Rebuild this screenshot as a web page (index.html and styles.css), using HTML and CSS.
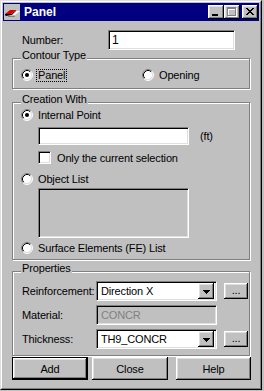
FILE: index.html
```html
<!DOCTYPE html>
<html>
<head>
<meta charset="utf-8">
<link rel="stylesheet" href="styles.css">
</head>
<body>
<div class="window">
  <div class="window-inner">
    <div class="titlebar">
      <svg class="app-icon" width="16" height="16" viewBox="0 0 16 16">
        <rect width="16" height="16" fill="#c0c0c0"/>
        <polygon points="4,11 9,7 16,7 11,11" fill="#fff"/>
        <polygon points="1,10 6,6 12,6 7,10" fill="#e00000"/>
        <polygon points="1,10 7,10 7,11 2,12 1,11" fill="#000"/>
        <polygon points="7,10 12,6 12,7 8,11 7,11" fill="#800000"/>
        <polygon points="4,12 11,12 11,13 4,13" fill="#808080"/>
      </svg>
      <span class="title">Panel</span>
      <div class="caption-btns">
        <div class="cbtn"><svg width="6" height="2" class="g-min"><rect width="6" height="2" fill="#000"/></svg></div>
        <div class="cbtn"><svg width="10" height="10" class="g-max"><path d="M1 1h9v2H1zM1 3h1v7H1zM9 3h1v7H9zM1 9h9v1H1z" fill="#fff"/><path d="M0 0h9v2H0zM0 2h1v7H0zM8 2h1v7H8zM0 8h9v1H0z" fill="#808080"/></svg></div>
        <div class="cbtn close"><svg width="8" height="7"><path d="M0 0h2v1H0zM6 0h2v1H6zM1 1h2v1H1zM5 1h2v1H5zM2 2h4v1H2zM3 3h2v1H3zM2 4h4v1H2zM1 5h2v1H1zM5 5h2v1H5zM0 6h2v1H0zM6 6h2v1H6z" fill="#000"/></svg></div>
      </div>
    </div>

    <div class="content">
      <div class="number-row">
        <span class="num-label">Number:</span>
        <div class="field num-input">1</div>
      </div>

      <div class="group contour">
        <span class="group-label">Contour Type</span>
        <div class="contour-row">
          <div class="opt opt-panel">
            <svg class="radio" width="12" height="12" viewBox="0 0 12 12"><circle cx="6" cy="6" r="5" fill="#fff"/><path d="M2.11 9.89A5.5 5.5 0 0 1 9.89 2.11" fill="none" stroke="#808080"/><path d="M9.89 2.11A5.5 5.5 0 0 1 2.11 9.89" fill="none" stroke="#fff"/><path d="M2.82 9.18A4.5 4.5 0 0 1 9.18 2.82" fill="none" stroke="#000"/><path d="M9.18 2.82A4.5 4.5 0 0 1 2.82 9.18" fill="none" stroke="#dfdfdf"/><circle cx="6" cy="6" r="2" fill="#000"/></svg>
            <span class="focus-text">Panel</span>
          </div>
          <div class="opt">
            <svg class="radio" width="12" height="12" viewBox="0 0 12 12"><circle cx="6" cy="6" r="5" fill="#fff"/><path d="M2.11 9.89A5.5 5.5 0 0 1 9.89 2.11" fill="none" stroke="#808080"/><path d="M9.89 2.11A5.5 5.5 0 0 1 2.11 9.89" fill="none" stroke="#fff"/><path d="M2.82 9.18A4.5 4.5 0 0 1 9.18 2.82" fill="none" stroke="#000"/><path d="M9.18 2.82A4.5 4.5 0 0 1 2.82 9.18" fill="none" stroke="#dfdfdf"/></svg>
            <span class="opt-text">Opening</span>
          </div>
        </div>
      </div>

      <div class="group creation">
        <span class="group-label">Creation With</span>
        <div class="opt opt-first">
          <svg class="radio" width="12" height="12" viewBox="0 0 12 12"><circle cx="6" cy="6" r="5" fill="#fff"/><path d="M2.11 9.89A5.5 5.5 0 0 1 9.89 2.11" fill="none" stroke="#808080"/><path d="M9.89 2.11A5.5 5.5 0 0 1 2.11 9.89" fill="none" stroke="#fff"/><path d="M2.82 9.18A4.5 4.5 0 0 1 9.18 2.82" fill="none" stroke="#000"/><path d="M9.18 2.82A4.5 4.5 0 0 1 2.82 9.18" fill="none" stroke="#dfdfdf"/><circle cx="6" cy="6" r="2" fill="#000"/></svg>
          <span class="opt-text">Internal Point</span>
        </div>
        <div class="point-row">
          <div class="field point-input"></div>
          <span class="unit">(ft)</span>
        </div>
        <div class="check-row">
          <div class="field check"></div>
          <span class="check-text">Only the current selection</span>
        </div>
        <div class="opt opt-object">
          <svg class="radio" width="12" height="12" viewBox="0 0 12 12"><circle cx="6" cy="6" r="5" fill="#fff"/><path d="M2.11 9.89A5.5 5.5 0 0 1 9.89 2.11" fill="none" stroke="#808080"/><path d="M9.89 2.11A5.5 5.5 0 0 1 2.11 9.89" fill="none" stroke="#fff"/><path d="M2.82 9.18A4.5 4.5 0 0 1 9.18 2.82" fill="none" stroke="#000"/><path d="M9.18 2.82A4.5 4.5 0 0 1 2.82 9.18" fill="none" stroke="#dfdfdf"/></svg>
          <span class="opt-text">Object List</span>
        </div>
        <div class="field listbox"></div>
        <div class="opt opt-surface">
          <svg class="radio" width="12" height="12" viewBox="0 0 12 12"><circle cx="6" cy="6" r="5" fill="#fff"/><path d="M2.11 9.89A5.5 5.5 0 0 1 9.89 2.11" fill="none" stroke="#808080"/><path d="M9.89 2.11A5.5 5.5 0 0 1 2.11 9.89" fill="none" stroke="#fff"/><path d="M2.82 9.18A4.5 4.5 0 0 1 9.18 2.82" fill="none" stroke="#000"/><path d="M9.18 2.82A4.5 4.5 0 0 1 2.82 9.18" fill="none" stroke="#dfdfdf"/></svg>
          <span class="opt-text">Surface Elements (FE) List</span>
        </div>
      </div>

      <div class="group props">
        <span class="group-label">Properties</span>
        <div class="prop-row first">
          <span class="prop-label">Reinforcement:</span>
          <div class="field combo">
            <span class="combo-text">Direction X</span>
            <div class="btn drop"><svg width="7" height="4"><path d="M0 0h7v1H0zM1 1h5v1H1zM2 2h3v1H2zM3 3h1v1H3z" fill="#000"/></svg></div>
          </div>
          <div class="btn dots">...</div>
        </div>
        <div class="prop-row">
          <span class="prop-label">Material:</span>
          <div class="field combo disabled"><span class="combo-text">CONCR</span></div>
        </div>
        <div class="prop-row">
          <span class="prop-label">Thickness:</span>
          <div class="field combo">
            <span class="combo-text">TH9_CONCR</span>
            <div class="btn drop"><svg width="7" height="4"><path d="M0 0h7v1H0zM1 1h5v1H1zM2 2h3v1H2zM3 3h1v1H3z" fill="#000"/></svg></div>
          </div>
          <div class="btn dots">...</div>
        </div>
      </div>

      <div class="button-row">
        <div class="default-wrap"><div class="btn push">Add</div></div>
        <div class="btn push close-btn">Close</div>
        <div class="btn push help-btn">Help</div>
      </div>
    </div>
  </div>
</div>
</body>
</html>
```

FILE: styles.css
```css
* { box-sizing: border-box; }

body {
  margin: 0;
  background: #c0c0c0;
  font-family: "Liberation Sans", Arial, sans-serif;
  font-size: 11px;
  letter-spacing: -0.15px;
  color: #000;
}

.window {
  width: 262px;
  height: 390px;
  border: 1px solid;
  border-color: #dfdfdf #000 #000 #dfdfdf;
  background: #c0c0c0;
}

.window-inner {
  height: 100%;
  border: 1px solid;
  border-color: #fff #808080 #808080 #fff;
  padding: 1px;
  display: flex;
  flex-direction: column;
}

/* Title bar */
.titlebar {
  height: 18px;
  background: #000080;
  display: flex;
  align-items: center;
  padding: 0 1px 0 1px;
}
.app-icon { display: block; flex: none; }
.title {
  color: #fff;
  font-weight: bold;
  font-size: 12px;
  letter-spacing: 0;
  margin-left: 4px;
  line-height: 18px;
}
.caption-btns {
  margin-left: auto;
  display: flex;
}
.cbtn {
  width: 16px;
  height: 14px;
  background: #c0c0c0;
  box-shadow: inset -1px -1px #000, inset 1px 1px #fff, inset -2px -2px #808080, inset 2px 2px #dfdfdf;
}
.cbtn svg { display: block; }
.cbtn .g-min { margin: 9px 0 0 4px; }
.cbtn .g-max { margin: 2px 0 0 3px; }
.cbtn.close { margin-left: 2px; }
.cbtn.close svg { margin: 3px 0 0 4px; }

/* Content */
.content {
  padding-left: 9px;
  display: flex;
  flex-direction: column;
}

.field {
  border: 1px solid;
  border-color: #808080 #fff #fff #808080;
  box-shadow: inset 1px 1px #000, inset -1px -1px #dfdfdf;
  background: #fff;
}

.btn {
  background: #c0c0c0;
  box-shadow: inset -1px -1px #000, inset 1px 1px #fff, inset -2px -2px #808080, inset 2px 2px #dfdfdf;
}

.number-row {
  margin-top: 9px;
  height: 20px;
  display: flex;
  align-items: center;
}
.num-label {
  width: 96px;
  padding-left: 10px;
}
.num-input {
  width: 127px;
  height: 20px;
  padding: 2px 3px;
  font-size: 12px;
  line-height: 14px;
}

.group {
  width: 238px;
  border: 1px solid #808080;
  box-shadow: inset 1px 1px #fff, 1px 1px #fff;
  display: flex;
  flex-direction: column;
}
.group-label {
  display: block;
  width: max-content;
  margin: -10px 0 0 8px;
  padding: 0 1px;
  background: #c0c0c0;
  line-height: 13px;
}

.contour { margin-top: 8px; padding-bottom: 6px; }
.contour-row {
  margin-top: 6px;
  display: flex;
}

.opt {
  height: 14px;
  margin-left: 8px;
  display: flex;
  align-items: center;
}
.radio { display: block; flex: none; }
.opt-text { margin-left: 5px; }
.opt-panel { width: 113px; }
.focus-text {
  margin-left: 3px;
  padding: 0 1px;
  border: 1px dotted #000;
  line-height: 11px;
}

.creation { margin-top: 13px; padding-bottom: 4px; }
.opt-first { margin-top: 2px; }
.point-row {
  margin-top: 5px;
  margin-left: 25px;
  height: 18px;
  display: flex;
  align-items: center;
}
.point-input { width: 151px; height: 18px; }
.unit { margin-left: 11px; }

.check-row {
  margin-top: 6px;
  margin-left: 25px;
  height: 13px;
  display: flex;
  align-items: center;
}
.check { width: 13px; height: 13px; flex: none; }
.check-text { margin-left: 6px; }

.opt-object { margin-top: 8px; }
.listbox {
  margin: 2px 0 0 25px;
  width: 151px;
  height: 50px;
  background: #c0c0c0;
}
.opt-surface { margin-top: 3px; }

.props { margin-top: 11px; padding-bottom: 6px; }
.prop-row {
  margin-top: 4px;
  height: 20px;
  display: flex;
  align-items: center;
}
.prop-row.first { margin-top: 6px; }
.prop-label {
  width: 83px;
  padding-left: 9px;
}
.combo {
  width: 121px;
  height: 20px;
  padding: 2px;
  display: flex;
  align-items: center;
}
.combo-text {
  padding-left: 2px;
}
.combo.disabled {
  background: #c0c0c0;
  color: #808080;
}
.drop {
  margin-left: auto;
  width: 16px;
  height: 16px;
  display: flex;
  align-items: center;
  justify-content: center;
}
.drop svg { display: block; margin-top: 1px; }
.dots {
  margin-left: 7px;
  width: 24px;
  height: 16px;
  text-align: center;
  line-height: 14px;
}

.button-row {
  margin-top: 1px;
  display: flex;
}
.push {
  height: 23px;
  display: flex;
  align-items: center;
  justify-content: center;
}
.default-wrap {
  width: 76px;
  height: 23px;
  border: 1px solid #000;
}
.default-wrap .push { height: 21px; }
.close-btn { width: 76px; margin-left: 4px; }
.help-btn { width: 75px; margin-left: 8px; }
```
